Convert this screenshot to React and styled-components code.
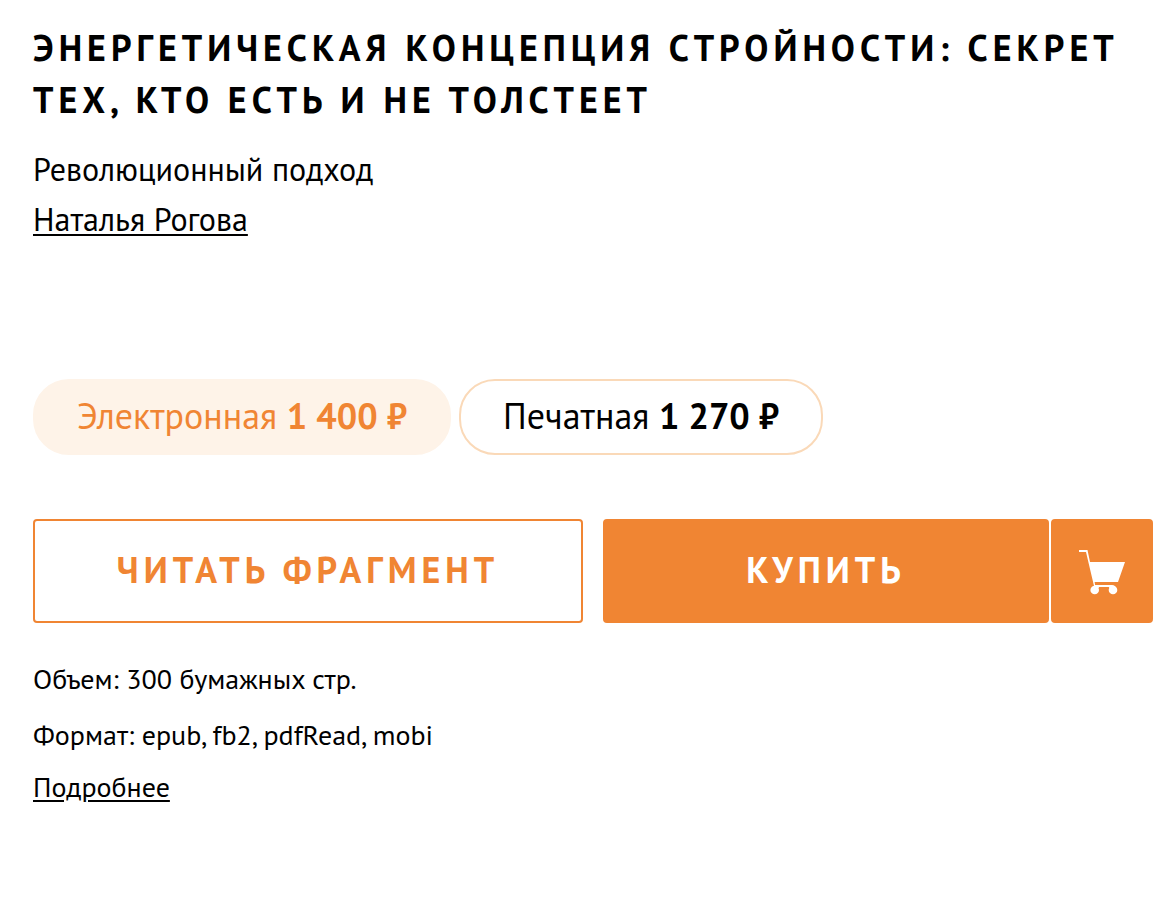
import React, { useState } from 'react';
import styled, { createGlobalStyle } from 'styled-components';

const ORANGE = '#f08533';

const EDITIONS = [
    { id: 'ebook', name: 'Электронная', price: '1 400 ₽' },
    { id: 'paper', name: 'Печатная', price: '1 270 ₽' },
];

export default function App() {
    const [edition, setEdition] = useState('ebook');

    return (
        <>
            <GlobalStyle />
            <Wrapper>
                <Title>ЭНЕРГЕТИЧЕСКАЯ КОНЦЕПЦИЯ СТРОЙНОСТИ: СЕКРЕТ ТЕХ, КТО ЕСТЬ И НЕ ТОЛСТЕЕТ</Title>
                <Subtitle>Революционный подход</Subtitle>
                <Author>
                    <TextLink href="#author">Наталья Рогова</TextLink>
                </Author>

                <Editions>
                    {EDITIONS.map(({ id, name, price }) => (
                        <Edition
                            key={id}
                            type="button"
                            $active={id === edition}
                            aria-pressed={id === edition}
                            onClick={() => setEdition(id)}
                        >
                            {name} <b>{price}</b>
                        </Edition>
                    ))}
                </Editions>

                <Actions>
                    <ActionBtn type="button" $outlined>ЧИТАТЬ ФРАГМЕНТ</ActionBtn>
                    <BuyGroup>
                        <ActionBtn type="button">КУПИТЬ</ActionBtn>
                        <CartBtn type="button" aria-label="В корзину">
                            <CartIcon />
                        </CartBtn>
                    </BuyGroup>
                </Actions>

                <Details>
                    <p>Объем: 300 бумажных стр.</p>
                    <p>Формат: epub, fb2, pdfRead, mobi</p>
                    <More>
                        <TextLink href="#details">Подробнее</TextLink>
                    </More>
                </Details>
            </Wrapper>
        </>
    )
}

function CartIcon() {
    return (
        <svg width="46" height="48" viewBox="0 0 46 48" fill="currentColor" aria-hidden="true">
            <path d="M0 3h8.500L11 15h35l-7 20H15.600l.5 3H33q3 0 4 3H17l-2-2L7 5H0z" />
            <path d="M19.500 40h11l-1.500 2h-8z" fill={ORANGE} />
            <circle cx="15.700" cy="43" r="4.300" />
            <circle cx="34" cy="43" r="4.300" />
        </svg>
    )
}

const GlobalStyle = createGlobalStyle`
    * {
        box-sizing: border-box;
    }

    body {
        margin: 0;
        background: #fff;
        color: #000;
        font-family: "PT Sans", Lato, "Noto Sans", sans-serif;
    }

    h1, p {
        margin: 0;
    }

    button {
        font-family: inherit;
        cursor: pointer;
    }
`

const Wrapper = styled.main`
    padding: 22px 7px 32px 33px;
`

const Title = styled.h1`
    font-size: 36px;
    line-height: 52px;
    font-weight: 700;
    letter-spacing: 5px;
`

const Subtitle = styled.p`
    margin-top: 18px;
    font-size: 32px;
    line-height: 50px;
`

const Author = styled.p`
    font-size: 32px;
    line-height: 50px;
`

const TextLink = styled.a`
    color: inherit;
    text-decoration: underline;
    text-decoration-thickness: 2px;
    text-underline-offset: 3px;
`

const Editions = styled.div`
    display: flex;
    flex-wrap: wrap;
    gap: 8px;
    margin-top: 135px;
`

const Edition = styled.button`
    padding: 0 42px 2px;
    border: 2px solid ${({ $active }) => ($active ? '#fef3e8' : '#fad9b8')};
    border-radius: 36px;
    background: ${({ $active }) => ($active ? '#fef3e8' : '#fff')};
    color: ${({ $active }) => ($active ? ORANGE : '#000')};
    font-size: 36px;
    line-height: 70px;
`

const Actions = styled.div`
    display: grid;
    grid-template-columns: 1fr 1fr;
    gap: 20px;
    margin-top: 64px;
`

const BuyGroup = styled.div`
    display: grid;
    grid-template-columns: 1fr 102px;
    gap: 2px;
`

const ActionBtn = styled.button`
    padding: 0 0 2px;
    border: 2px solid ${ORANGE};
    border-radius: 4px;
    background: ${({ $outlined }) => ($outlined ? '#fff' : ORANGE)};
    color: ${({ $outlined }) => ($outlined ? ORANGE : '#fff')};
    font-size: 36px;
    line-height: 98px;
    font-weight: 700;
    letter-spacing: 5px;
`

const CartBtn = styled(ActionBtn)`
    display: flex;
    align-items: center;
    justify-content: center;
    padding: 0;
`

const Details = styled.div`
    margin-top: 28px;
    font-size: 28px;
    line-height: 56px;
`

const More = styled.p`
    line-height: 48px;
`
